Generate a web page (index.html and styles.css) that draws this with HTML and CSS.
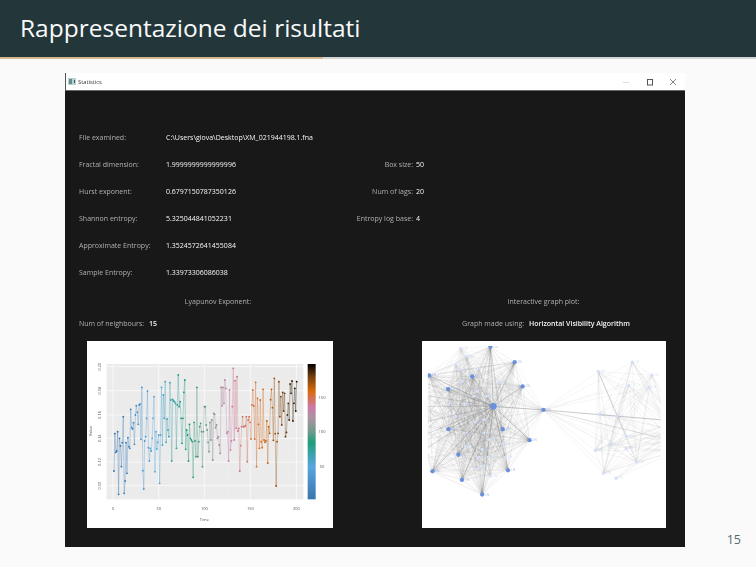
FILE: index.html
```html
<!DOCTYPE html>
<html>
  <head>
    <title>Rappresentazione dei risultati</title>
    <link rel="stylesheet" href="styles.css">
  </head>
  <body>
    <header class="frame-title">
      <h1>Rappresentazione dei risultati</h1>
    </header>
    <div class="progress"><div class="progress-done"></div></div>

    <main class="slide">
      <!-- Screenshot of the results window -->
      <section class="window">
        <div class="titlebar">
          <div class="titlebar-name">
            <svg class="app-icon" width="8" height="7" viewBox="0 0 8 7">
              <rect width="8" height="7" fill="#b9cfd0"/>
              <rect x="1" y="1" width="3" height="5" fill="#5f8f8c"/>
              <rect x="6" y="2" width="1" height="3" fill="#4a5a5c"/>
            </svg>
            <span>Statistics</span>
          </div>
          <div class="controls">
            <svg width="8" height="8" viewBox="0 0 8 8"><path d="M1 4.5h6" stroke="#ddd"/></svg>
            <svg width="8" height="8" viewBox="0 0 8 8"><rect x="1.5" y="1.5" width="5" height="5.5" fill="none" stroke="#555"/></svg>
            <svg width="8" height="8" viewBox="0 0 8 8"><path d="M1 1l6 6M7 1l-6 6" stroke="#666" stroke-width=".8" fill="none"/></svg>
          </div>
        </div>

        <div class="window-body">
          <div class="stats">
            <span class="label">File examined:</span>
            <span class="value wide">C:\Users\giova\Desktop\XM_021944198.1.fna</span>

            <span class="label">Fractal dimension:</span>
            <span class="value">1.9999999999999996</span>
            <span class="label right">Box size:</span>
            <span class="value param">50</span>

            <span class="label">Hurst exponent:</span>
            <span class="value">0.6797150787350126</span>
            <span class="label right">Num of lags:</span>
            <span class="value param">20</span>

            <span class="label">Shannon entropy:</span>
            <span class="value">5.325044841052231</span>
            <span class="label right">Entropy log base:</span>
            <span class="value param">4</span>

            <span class="label">Approximate Entropy:</span>
            <span class="value wide">1.3524572641455084</span>

            <span class="label">Sample Entropy:</span>
            <span class="value wide">1.33973306086038</span>
          </div>

          <div class="plots">
            <div class="plot-col">
              <div class="plot-title label">Lyapunov Exponent:</div>
              <div class="plot-option">
                <span class="label">Num of neighbours:</span>
                <span class="value strong">15</span>
              </div>
              <svg class="plot-img lyapunov" viewBox="81 18 738 561">
                <defs>
                  <linearGradient id="scale" x1="0" y1="1" x2="0" y2="0">
                    <stop offset="0" stop-color="#3a76ae"/>
                    <stop offset=".24" stop-color="#58a6de"/>
                    <stop offset=".42" stop-color="#1f9d7c"/>
                    <stop offset=".5" stop-color="#6f9a8c"/>
                    <stop offset=".6" stop-color="#a9949f"/>
                    <stop offset=".68" stop-color="#cc79a7"/>
                    <stop offset=".8" stop-color="#d8680c"/>
                    <stop offset=".9" stop-color="#7a4210"/>
                    <stop offset="1" stop-color="#000"/>
                  </linearGradient>
                </defs>
                <rect x="140" y="87" width="590" height="406" fill="#ebebeb"/>
                <g class="grid-minor">
                  <path d="M140 416H730M140 345H730M140 275H730M140 204H730M140 131H730M228 87V493M365 87V493M502 87V493M640 87V493"/>
                </g>
                <g class="grid-major">
                  <path d="M140 452H730M140 381H730M140 310H730M140 240H730M140 167H730M140 95H730M159 87V493M296 87V493M433 87V493M571 87V493M709 87V493"/>
                </g>
                <g id="series"></g>
                <rect x="743" y="87" width="24" height="406" fill="url(#scale)"/>
                <g class="axis-text">
                  <text transform="translate(124 452) rotate(-90)">0.10</text>
                  <text transform="translate(124 381) rotate(-90)">0.12</text>
                  <text transform="translate(124 310) rotate(-90)">0.14</text>
                  <text transform="translate(124 240) rotate(-90)">0.16</text>
                  <text transform="translate(124 167) rotate(-90)">0.18</text>
                  <text transform="translate(124 95) rotate(-90)">0.20</text>
                  <text x="159" y="524">0</text>
                  <text x="296" y="524">50</text>
                  <text x="433" y="524">100</text>
                  <text x="571" y="524">150</text>
                  <text x="709" y="524">200</text>
                  <text x="786" y="398">50</text>
                  <text x="786" y="295">100</text>
                  <text x="786" y="192">150</text>
                  <text x="433" y="557">Time</text>
                  <text transform="translate(96 288) rotate(-90)">Value</text>
                </g>
              </svg>
            </div>

            <div class="plot-col">
              <div class="plot-title label">Interactive graph plot:</div>
              <div class="plot-option center">
                <span class="label">Graph made using:</span>
                <span class="value strong">Horizontal Visibility Algorithm</span>
              </div>
              <svg class="plot-img network" viewBox="20 18 733 564">
                <defs>
                  <clipPath id="graph-area"><rect x="36" y="33" width="702" height="500"/></clipPath>
                </defs>
                <g id="graph" clip-path="url(#graph-area)"></g>
              </svg>
            </div>
          </div>
        </div>
      </section>
    </main>

    <div class="page-number">15</div>

    <script src="charts.js"></script>
  </body>
</html>
```

FILE: styles.css
```css
html,
body {
  margin: 0;
  height: 567px;
  overflow: hidden;
}
body {
  display: flex;
  flex-direction: column;
  position: relative;
  background-color: #fafafa;
  font-family: "Open Sans", sans-serif;
}

/* Slide header */
.frame-title {
  height: 57px;
  box-sizing: border-box;
  display: flex;
  align-items: center;
  padding: 0 0 3px 20px;
  background-color: #23373b;
}
.frame-title h1 {
  margin: 0;
  font-size: 24.5px;
  font-weight: 400;
  color: #fafafa;
}
.progress {
  height: 2px;
  background-color: #d4d4d4;
}
.progress-done {
  width: 323px;
  height: 2px;
  background-color: #d6b88e;
}
.slide {
  display: flex;
  padding: 14px 0 0 65px;
}
.page-number {
  position: absolute;
  right: 15px;
  bottom: 19px;
  font-size: 12.5px;
  color: #566a6e;
}

/* Window */
.window {
  width: 620px;
  display: flex;
  flex-direction: column;
}
.titlebar {
  height: 17px;
  display: flex;
  align-items: center;
  justify-content: space-between;
  background-color: #fff;
  border-left: 1px solid #555;
  border-bottom: 1px solid #666;
}
.titlebar-name {
  display: flex;
  align-items: center;
  gap: 2px;
  padding-left: 2px;
  font-size: 5.8px;
  color: #333;
  filter: blur(0.2px);
}
.app-icon {
  display: block;
}
.controls {
  display: flex;
  gap: 15.5px;
  padding-right: 8px;
}
.controls svg {
  display: block;
}
.window-body {
  height: 456px;
  box-sizing: border-box;
  padding: 33px 0 0 14px;
  background-color: #181818;
  font-size: 7px;
}
.label {
  color: #b0b0b0;
}
.value {
  color: #f6f6f6;
}
.stats {
  display: grid;
  grid-template-columns: 87px 180px 67px auto;
  grid-auto-rows: 27px;
  align-items: center;
  white-space: nowrap;
  filter: blur(0.2px);
}
.wide {
  grid-column: 2 / 5;
}
.right {
  text-align: right;
}
.param {
  padding-left: 3px;
}

/* Plots */
.plots {
  display: grid;
  grid-template-columns: 278px 283px;
  column-gap: 45px;
  margin-top: 8px;
}
.plot-title {
  height: 16px;
  line-height: 16px;
  text-align: center;
  filter: blur(0.2px);
}
.plot-option {
  height: 16px;
  line-height: 16px;
  margin-top: 6px;
  white-space: nowrap;
  filter: blur(0.2px);
}
.plot-option.center {
  text-align: center;
  padding-left: 5px;
}
.strong {
  padding-left: 3px;
  font-weight: 600;
}
.plot-img {
  display: block;
  margin-top: 9px;
  height: 187px;
  background-color: #fff;
  filter: blur(0.35px);
}
.lyapunov {
  width: 246px;
  margin-left: 8px;
}
.network {
  width: 244px;
  margin-left: 20px;
}
.grid-major path {
  stroke: #fff;
  stroke-width: 2;
  fill: none;
}
.grid-minor path {
  stroke: #f3f3f3;
  stroke-width: 1;
  fill: none;
}
.axis-text text {
  font-size: 12px;
  fill: #555;
  text-anchor: middle;
}
.node-label {
  font-size: 10px;
  fill: #a9bde8;
}
```

FILE: charts.js
```js
// y positions of the series, one per time step, in the plot's own units
const series = [
  408, 296, 352, 348, 290, 478, 310, 333, 395, 323,
  245, 475, 438, 323, 415, 308, 335, 340, 223, 278,
  282, 263, 328, 240, 212, 232, 268, 210, 207, 313,
  157, 407, 462, 318, 305, 250, 168, 338, 378, 340,
  348, 310, 250, 185, 410, 290, 342, 322, 300, 445,
  300, 157, 330, 180, 250, 140, 322, 252, 285, 305,
  143, 195, 378, 193, 198, 200, 205, 340, 210, 120,
  215, 200, 250, 325, 250, 172, 135, 343, 285, 300,
  378, 268, 310, 315, 320, 427, 262, 318, 365, 157,
  365, 320, 275, 265, 290, 395, 290, 215, 215, 270,
  285, 322, 350, 262, 315, 255, 375, 235, 238, 278,
  270, 310, 305, 330, 355, 157, 212, 157, 205, 135,
  160, 295, 290, 378, 165, 345, 318, 215, 100, 315,
  137, 280, 125, 288, 280, 408, 332, 275, 245, 275,
  275, 272, 245, 380, 255, 245, 262, 312, 210, 165,
  213, 312, 142, 395, 190, 268, 340, 195, 320, 338,
  163, 315, 322, 318, 258, 384, 275, 295, 194, 163,
  218, 316, 130, 296, 453, 320, 295, 140, 245, 185,
  270, 172, 228, 175, 305, 292, 240, 205, 255, 147,
  175, 138, 258, 205, 160, 228, 140
];

const stops = [
  [0, [48, 110, 170]],
  [45, [88, 166, 222]],
  [80, [20, 150, 115]],
  [100, [111, 154, 140]],
  [125, [204, 121, 167]],
  [160, [216, 104, 12]],
  [180, [122, 66, 16]],
  [200, [0, 0, 0]]
];

function colorAt(t) {
  for (let i = 1; i < stops.length; i++) {
    if (t <= stops[i][0]) {
      const a = stops[i - 1];
      const b = stops[i];
      const k = (t - a[0]) / (b[0] - a[0]);
      const rgb = a[1].map((v, n) => Math.round(v + (b[1][n] - v) * k));
      return `rgb(${rgb.join(",")})`;
    }
  }
  return "#000";
}

// Time series
let seriesHtml = "";
const xs = series.map((y, i) => 159 + 2.755 * (i + 1) * (200 / series.length));
series.forEach((y, i) => {
  if (i > 0) {
    seriesHtml += `<line x1="${xs[i - 1]}" y1="${series[i - 1]}" x2="${xs[i]}" y2="${y}" stroke="${colorAt(i)}" stroke-width="2.4" opacity=".42"/>`;
  }
});
series.forEach((y, i) => {
  seriesHtml += `<circle cx="${xs[i]}" cy="${y}" r="2.8" fill="${colorAt(i)}"/>`;
});
document.querySelector("#series").innerHTML = seriesHtml;

// Graph nodes, read off the plot
const hub = [234, 215];
const bridge = [385, 226];
const bright = [
  [225, 35], [298, 82], [322, 155], [170, 125], [97, 163], [40, 122], [98, 284],
  [262, 284], [343, 317], [128, 361], [50, 411], [139, 437], [278, 408], [200, 481]
];
const faintLeft = [
  [135, 40], [153, 65], [120, 90], [190, 100], [133, 105], [140, 140], [255, 143],
  [185, 170], [175, 185], [213, 185], [98, 208], [148, 210], [120, 245], [205, 255],
  [178, 262], [205, 295], [145, 295], [220, 315], [262, 328], [150, 335], [200, 345],
  [190, 368], [218, 368], [270, 368], [205, 395], [180, 403], [225, 425]
];
const offLeft = [[-10, 215], [-20, 130], [-20, 320], [-10, 270], [-30, 380], [-15, 175]];
const faintRight = [
  [550, 110], [653, 82], [712, 121], [703, 158], [642, 152], [553, 239], [606, 245],
  [635, 305], [583, 332], [541, 348], [634, 342], [666, 383], [566, 417], [604, 432]
];
const offRight = [[790, 260], [780, 320], [800, 190], [785, 350], [795, 290]];

function edge(a, b, color, width) {
  return `<line x1="${a[0]}" y1="${a[1]}" x2="${b[0]}" y2="${b[1]}" stroke="${color}" stroke-width="${width}"/>`;
}

let graphHtml = "";
const leftAll = bright.concat(faintLeft);

// faint mesh of the left community
faintLeft.forEach((a, i) => {
  faintLeft.concat(offLeft).forEach((b, j) => {
    if (j > i && (i + j) % 3 === 0) graphHtml += edge(a, b, "rgba(110,110,110,.2)", 1);
  });
});
bright.forEach((a) => {
  leftAll.concat(offLeft).forEach((b) => {
    graphHtml += edge(a, b, "rgba(110,110,110,.15)", 1);
  });
});
leftAll.forEach((a) => {
  graphHtml += edge(a, bridge, "rgba(110,110,110,.16)", 1);
  graphHtml += edge(a, hub, "rgba(110,110,110,.22)", 1);
});
offLeft.forEach((a) => {
  graphHtml += edge(a, hub, "rgba(90,90,90,.4)", 1.6);
});
bright.forEach((a) => {
  graphHtml += edge(a, hub, "rgba(90,90,90,.42)", 1.8);
});
graphHtml += edge(hub, bridge, "rgba(90,90,90,.5)", 1.8);

// right community
faintRight.forEach((a, i) => {
  faintRight.concat(offRight).forEach((b, j) => {
    if (j > i && (i * 3 + j) % 3 !== 1) graphHtml += edge(a, b, "rgba(110,110,110,.22)", 1);
  });
  graphHtml += edge(a, bridge, "rgba(110,110,110,.2)", 1);
});
graphHtml += edge(bridge, offRight[0], "rgba(110,110,110,.55)", 1.5);
graphHtml += edge(bridge, offRight[1], "rgba(110,110,110,.45)", 1.5);
graphHtml += edge(faintRight[0], faintRight[7], "rgba(110,110,110,.5)", 1.5);

// nodes on top
faintLeft.concat(faintRight).forEach((n) => {
  graphHtml += `<circle cx="${n[0]}" cy="${n[1]}" r="5" fill="#d5e0f6"/>`;
  graphHtml += `<text class="node-label" x="${n[0] + 8}" y="${n[1] + 3}" opacity=".45">LN</text>`;
});
bright.forEach((n) => {
  graphHtml += `<circle cx="${n[0]}" cy="${n[1]}" r="6.5" fill="#6a8fdc"/>`;
  graphHtml += `<text class="node-label" x="${n[0] + 9}" y="${n[1] + 3}">LN</text>`;
});
graphHtml += `<circle cx="${bridge[0]}" cy="${bridge[1]}" r="6.5" fill="#6a8fdc"/>`;
graphHtml += `<text class="node-label" x="${bridge[0] + 9}" y="${bridge[1] + 3}">LN</text>`;
graphHtml += `<circle cx="${hub[0]}" cy="${hub[1]}" r="10" fill="#6a8fdc"/>`;
graphHtml += `<text class="node-label" x="${hub[0] + 13}" y="${hub[1] + 3}">LN</text>`;
document.querySelector("#graph").innerHTML = graphHtml;
```
